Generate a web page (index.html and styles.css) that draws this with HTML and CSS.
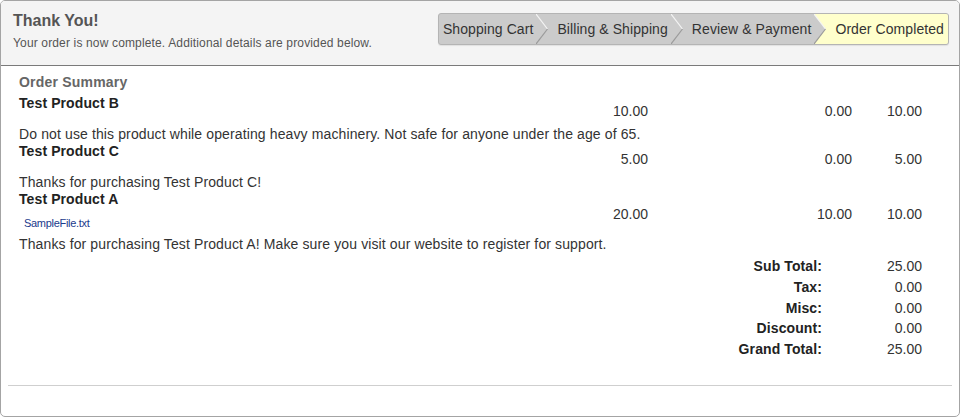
FILE: index.html
```html
<!DOCTYPE html>
<html>
<head>
<meta charset="utf-8">
<link rel="stylesheet" href="styles.css">
</head>
<body>
<div class="panel">
  <div class="header">
    <div class="intro">
      <div class="title">Thank You!</div>
      <div class="subtitle">Your order is now complete. Additional details are provided below.</div>
    </div>
    <div class="crumbs">
      <span class="crumb first">Shopping Cart</span>
      <svg class="sep" width="12" height="30" viewBox="0 0 12 30"><rect width="12" height="30" fill="#cbcbcb"/><polygon points="0,0 11.5,15 0,30" fill="#cbcbcb"/><polyline points="0,0 11.5,15" fill="none" stroke="#f4f4f4" stroke-width="1.2"/><polyline points="11.5,15 0,30" fill="none" stroke="#9a9a9a" stroke-width="1.2"/></svg>
      <span class="crumb">Billing &amp; Shipping</span>
      <svg class="sep" width="12" height="30" viewBox="0 0 12 30"><rect width="12" height="30" fill="#cbcbcb"/><polygon points="0,0 11.5,15 0,30" fill="#cbcbcb"/><polyline points="0,0 11.5,15" fill="none" stroke="#f4f4f4" stroke-width="1.2"/><polyline points="11.5,15 0,30" fill="none" stroke="#9a9a9a" stroke-width="1.2"/></svg>
      <span class="crumb">Review &amp; Payment</span>
      <svg class="sep" width="12" height="30" viewBox="0 0 12 30"><rect width="12" height="30" fill="#ffffcc"/><polygon points="0,0 11.5,15 0,30" fill="#cbcbcb"/><polyline points="0,0 11.5,15" fill="none" stroke="#f4f4f4" stroke-width="1.2"/><polyline points="11.5,15 0,30" fill="none" stroke="#9a9a9a" stroke-width="1.2"/></svg>
      <span class="crumb current">Order Completed</span>
    </div>
  </div>
  <div class="content">
    <div class="summary">
      <div class="heading">Order Summary</div>

      <div class="item">
        <div class="prod"><div class="name">Test Product B</div></div>
        <div class="num">10.00</div>
        <div class="num">0.00</div>
        <div class="num">10.00</div>
      </div>
      <div class="desc">Do not use this product while operating heavy machinery. Not safe for anyone under the age of 65.</div>

      <div class="item">
        <div class="prod"><div class="name">Test Product C</div></div>
        <div class="num">5.00</div>
        <div class="num">0.00</div>
        <div class="num">5.00</div>
      </div>
      <div class="desc">Thanks for purchasing Test Product C!</div>

      <div class="item">
        <div class="prod with-file"><div class="name">Test Product A</div><div class="file">SampleFile.txt</div></div>
        <div class="num">20.00</div>
        <div class="num">10.00</div>
        <div class="num">10.00</div>
      </div>
      <div class="desc">Thanks for purchasing Test Product A! Make sure you visit our website to register for support.</div>

      <div class="totals">
        <div class="label">Sub Total:</div><div class="value">25.00</div>
        <div class="label">Tax:</div><div class="value">0.00</div>
        <div class="label">Misc:</div><div class="value">0.00</div>
        <div class="label">Discount:</div><div class="value">0.00</div>
        <div class="label">Grand Total:</div><div class="value">25.00</div>
      </div>
    </div>
    <div class="rule"></div>
  </div>
</div>
</body>
</html>
```

FILE: styles.css
```css
html, body {
  margin: 0;
  padding: 0;
  background: #ffffff;
}
body {
  font-family: "Liberation Sans", Arial, sans-serif;
  color: #333;
}
.panel {
  width: 960px;
  height: 417px;
  box-sizing: border-box;
  border: 1px solid #a4a4a4;
  border-radius: 5px;
  overflow: hidden;
  display: flex;
  flex-direction: column;
}
.header {
  height: 64px;
  background: #f4f4f4;
  border-bottom: 1px solid #7a7a7a;
  display: flex;
  align-items: flex-start;
  padding: 0 10px 0 12px;
}
.intro {
  padding-top: 10px;
}
.title {
  font-size: 16px;
  line-height: 20px;
  font-weight: bold;
  color: #555;
}
.subtitle {
  margin-top: 4px;
  font-size: 12px;
  line-height: 16px;
  color: #555;
  letter-spacing: 0.15px;
}
.crumbs {
  margin-left: auto;
  margin-top: 12px;
  display: flex;
  height: 30px;
  border: 1px solid #b4b4b4;
  border-radius: 3px;
  background: #cbcbcb;
  overflow: hidden;
  box-shadow: 0 1px 1px rgba(0,0,0,0.08);
}
.crumb {
  font-size: 14px;
  line-height: 30px;
  color: #333;
  padding: 0 3px 0 9px;
  white-space: nowrap;
  letter-spacing: 0.08px;
}
.crumb.first {
  padding-left: 4px;
}
.crumb.current {
  background: #ffffcc;
  padding-right: 4px;
}
.sep {
  display: block;
  flex: none;
}
.content {
  padding: 8px 7px 0 7px;
}
.summary {
  padding: 0 30px 0 11px;
}
.heading {
  font-size: 14px;
  line-height: 16px;
  font-weight: bold;
  color: #666;
  margin-bottom: 5px;
  letter-spacing: 0.2px;
}
.item {
  display: grid;
  grid-template-columns: 1fr 100px 204px 70px;
  align-items: center;
}
.prod {
  padding-bottom: 15px;
}
.prod.with-file {
  padding-bottom: 6px;
}
.name {
  font-size: 14px;
  line-height: 16px;
  font-weight: bold;
  color: #222;
  letter-spacing: 0.1px;
}
.file {
  margin-top: 9px;
  padding-left: 5px;
  font-size: 11px;
  line-height: 14px;
  color: #1a3a8c;
  letter-spacing: -0.3px;
}
.num {
  text-align: right;
  font-size: 14px;
  line-height: 16px;
  color: #333;
}
.desc {
  font-size: 14px;
  line-height: 16px;
  color: #333;
  margin-bottom: 1px;
  letter-spacing: 0.12px;
}
.totals {
  margin-top: 4px;
  display: grid;
  grid-template-columns: 1fr 100px;
  font-size: 14px;
  line-height: 20.75px;
}
.label {
  text-align: right;
  font-weight: bold;
  color: #222;
  letter-spacing: 0.1px;
}
.value {
  text-align: right;
  color: #333;
}
.rule {
  margin-top: 25px;
  border-top: 1px solid #cfcfcf;
}
```
